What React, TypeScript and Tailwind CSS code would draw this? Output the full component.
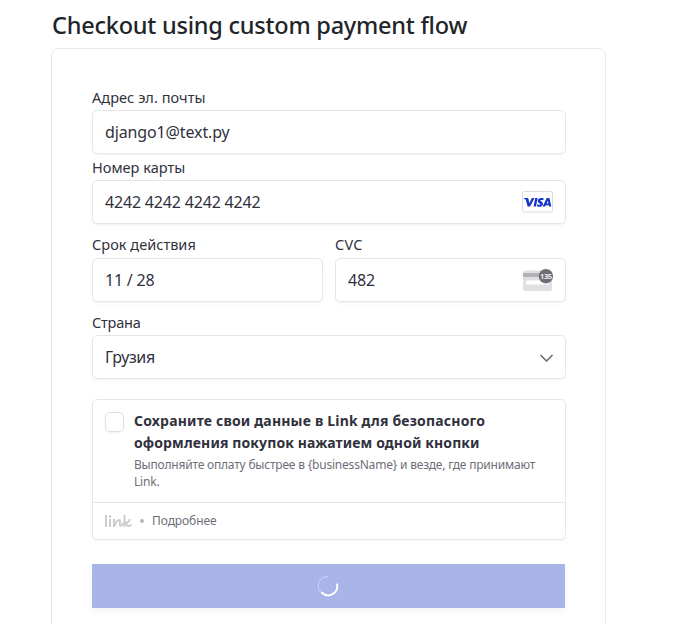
import type { ReactNode } from "react";

const field =
  "flex h-11 w-full items-center justify-between rounded-[5px] border border-[#e6e6e6] bg-white pl-3 pr-[11px] text-[#30313d] shadow-[0_1px_1px_rgba(0,0,0,0.03),0_3px_6px_rgba(0,0,0,0.02)]";

function Label({ className, children }: { className: string; children: ReactNode }) {
  return (
    <div className={`h-[17px] whitespace-nowrap text-[14.5px] leading-[17px] text-[#30313d] ${className}`}>{children}</div>
  );
}

function Value({ className, children }: { className: string; children: ReactNode }) {
  return <span className={`whitespace-nowrap text-[16px] leading-5 ${className}`}>{children}</span>;
}

function VisaIcon() {
  return (
    <svg className="h-[22px] w-8" viewBox="0 0 32 22" aria-label="Visa">
      <rect x="0.5" y="0.5" width="30" height="20.5" rx="1.6" fill="#fff" stroke="#dcdcdc" />
      <path
        fill="#1434cb"
        transform="translate(-0.3 0.6)"
        d="M2 6.4h3.6c.7 0 1 .3 1.2.9l.9 4.3 2.4-5.2h2.7L8.4 15H5.9L4.2 8.4C3.7 7.6 2.9 7 2 6.6zM13.5 6.4h2.4L14.3 15h-2.4zM22 6.8l-.4 1.9c-1-.5-3-.7-3.1.2 0 .8 2.8 1 2.8 3.2 0 3.2-4 3.5-6.1 2.6l.4-2c1.1.6 3.2.9 3.3-.1 0-.9-2.8-1-2.8-3.3 0-3.1 3.9-3.4 5.9-2.5zM25.6 6.4h2.1L29.6 15h-2.2l-.3-1.3h-3l-.6 1.3H21l3.6-7.8c.2-.5.5-.8 1-.8zm.5 2.7-1.2 2.9h1.8z"
      />
    </svg>
  );
}

function CvcIcon() {
  return (
    <svg className="mb-[3px] h-6 w-8" viewBox="0 0 32 24" aria-label="CVC">
      <rect x="1" y="3.5" width="29" height="20.4" rx="2.5" fill="#e0e0e2" />
      <path d="M1 6h29v4H1z" fill="#b2b2b6" />
      <rect x="4" y="13.5" width="23" height="4" rx="1.5" fill="#fff" />
      <circle cx="23.9" cy="9.2" r="7.2" fill="#6d6e78" />
      <text x="23.9" y="11.9" textAnchor="middle" fontSize="7.4" fontWeight="600" letterSpacing="-0.3" fill="#fff">
        135
      </text>
    </svg>
  );
}

function LinkLogo() {
  return (
    <svg className="ml-px h-[14px] w-[27px]" viewBox="0 0 27 14" fill="none" stroke="#cdcdcf" strokeWidth="2" aria-label="Link">
      <path d="M1 1v12M5 5v8M9 5v8M9 12.5c1.2-3 3.2-6.600 5.200-6.600 2.100 0-.7 6 1.100 6 1.200 0 2.800-2 4.200-4.200M19.500 1v12M19.500 9c2.600 0 4.800-1.600 5.400-4M21 9c1 3.300 3 3.800 5.500 1.400" />
      <circle cx="5" cy="2.5" r="1.2" fill="#cdcdcf" stroke="none" />
    </svg>
  );
}

export default function App() {
  return (
    <div className="h-[624px] w-[695px] overflow-hidden bg-white pl-[51px] font-['Noto_Sans','Open_Sans',sans-serif]">
      <h1 className="mt-[10px] ml-px h-[30px] whitespace-nowrap text-[23.5px] leading-[30px] font-medium tracking-[-0.23px] text-[#212529]">
        Checkout using custom payment flow
      </h1>
      <main className="mt-2 h-[640px] w-[555px] rounded-[8px] border border-[#e9e9e9] pt-10 pr-[39px] pl-10 shadow-[0_1px_3px_rgba(0,0,0,0.04)]">
        <Label className="tracking-[0.06px]">Адрес эл. почты</Label>
        <div className={`mt-1 ${field}`}>
          <Value className="tracking-[-0.13px]">django1@text.py</Value>
        </div>
        <Label className="mt-[5px] tracking-[0.02px]">Номер карты</Label>
        <div className={`mt-1 ${field}`}>
          <Value className="tracking-[-0.18px]">4242 4242 4242 4242</Value>
          <VisaIcon />
        </div>
        <div className="mt-3 flex gap-3">
          <div className="flex-1">
            <Label className="tracking-[0.03px]">Срок действия</Label>
            <div className={`mt-[5px] ${field}`}>
              <Value className="tracking-[-0.2px]">11 / 28</Value>
            </div>
          </div>
          <div className="flex-1">
            <Label className="tracking-[0.3px]">CVC</Label>
            <div className={`mt-[5px] ${field}`}>
              <Value className="tracking-[-0.2px]">482</Value>
              <CvcIcon />
            </div>
          </div>
        </div>
        <Label className="mt-3 tracking-[-0.2px]">Страна</Label>
        <div className={`mt-1 ${field}`}>
          <Value className="tracking-[-0.38px]">Грузия</Value>
          <svg className="h-3 w-[14px]" viewBox="0 0 14 12" fill="none" stroke="#6d6e78" strokeWidth="1.7" strokeLinecap="round" strokeLinejoin="round">
            <path d="m1 4.5 5.500 5.500L12 4.500" />
          </svg>
        </div>
        <section className="mt-5 h-[141px] rounded-[5px] border border-[#e6e6e6] shadow-[0_1px_1px_rgba(0,0,0,0.03),0_3px_6px_rgba(0,0,0,0.02)]">
          <div className="flex h-[103px] gap-2.5 border-b border-[#e6e6e6] px-3 pt-[10px]">
            <span className="mt-[2px] h-5 w-[19px] shrink-0 rounded-[5px] border border-[#e0e0e0] shadow-[0_1px_2px_rgba(0,0,0,0.06)]" />
            <div className="whitespace-nowrap">
              <div className="text-[14px] leading-[22px] font-bold text-[#30313d]">
                <p className="tracking-[0.18px]">Сохраните свои данные в Link для безопасного</p>
                <p className="tracking-[0.12px]">оформления покупок нажатием одной кнопки</p>
              </div>
              <div className="mt-[2px] text-[12px] leading-[17px] text-[#6d6e78]">
                <p className="tracking-[-0.205px]">Выполняйте оплату быстрее в {"{businessName}"} и везде, где принимают</p>
                <p className="tracking-[-0.2px]">Link.</p>
              </div>
            </div>
          </div>
          <div className="flex h-9 items-center px-[11px]">
            <LinkLogo />
            <span className="ml-2 size-1 rounded-full bg-[#b8b8bc]" />
            <span className="ml-2 text-[12px] leading-4 tracking-[-0.08px] text-[#6d6e78]">Подробнее</span>
          </div>
        </section>
        <button className="mt-6 flex h-11 w-[473px] items-center justify-center bg-[#a9b4e9] pr-[2px] shadow-[0_4px_6px_rgba(50,50,93,0.05)]">
          <svg className="size-[22px]" viewBox="0 0 22 22" fill="none" stroke="#fff" strokeLinecap="round">
            <path d="M10.500 1.500A9.400 9.400 0 0 0 5 18.300" strokeWidth="0.7" opacity="0.6" />
            <path d="M5 17.800A9 9 0 0 0 20 9.500" strokeWidth="2" />
          </svg>
        </button>
      </main>
    </div>
  );
}
